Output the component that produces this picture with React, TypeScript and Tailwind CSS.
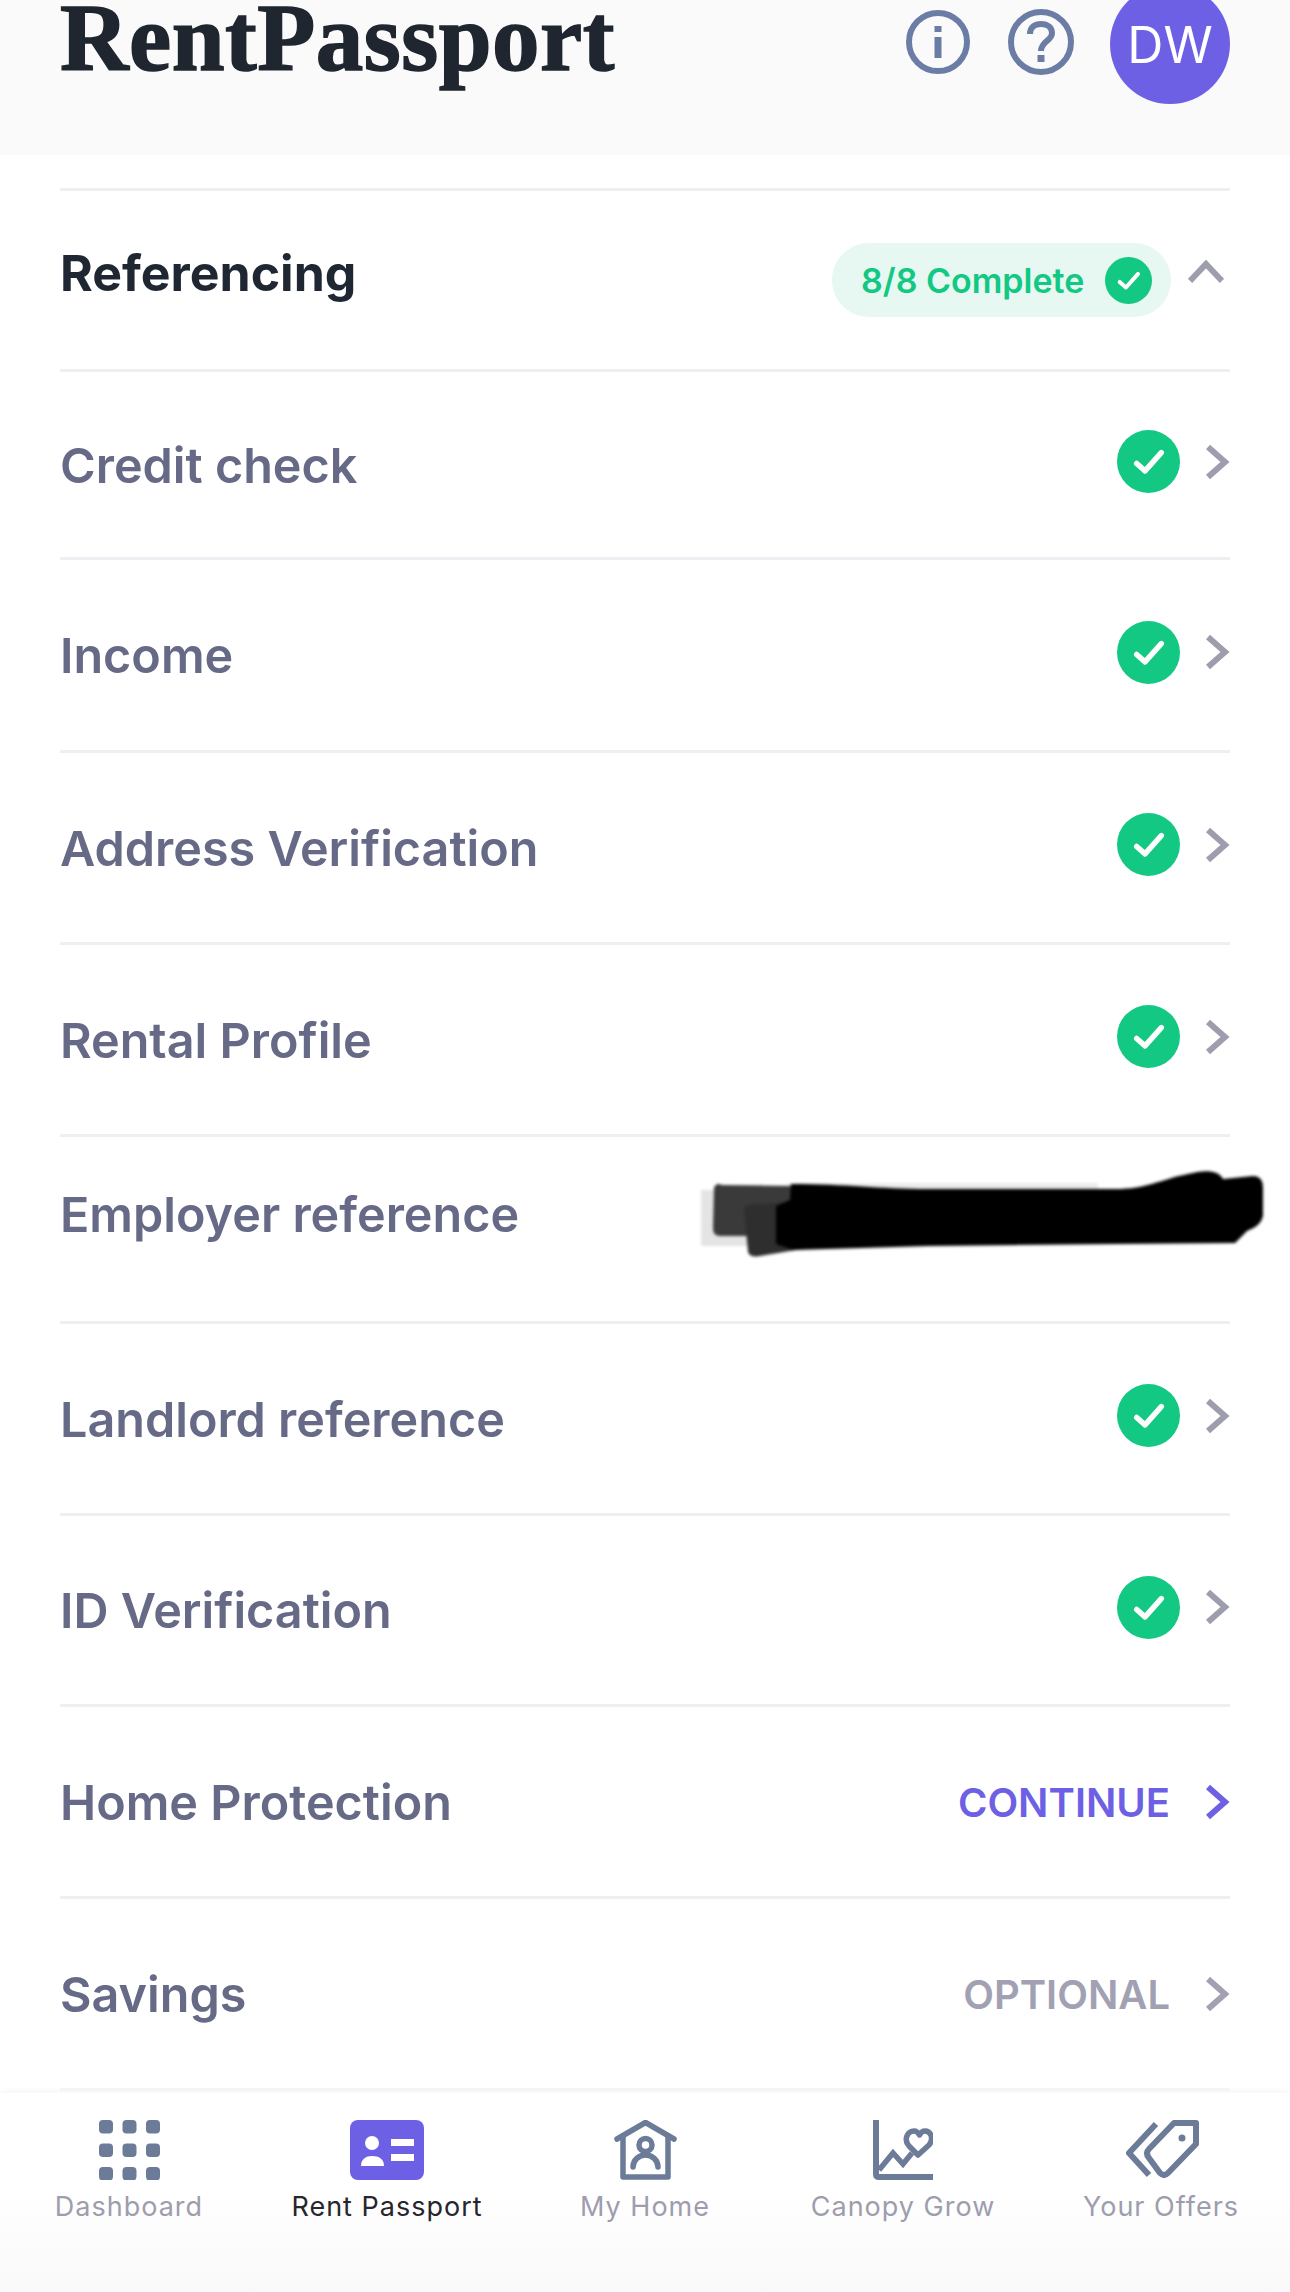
import React from "react";

const Chevron = ({ color }: { color: string }) => (
  <svg width="24" height="36" viewBox="0 0 24 36" fill="none" className="block">
    <path d="M2 3 L19 18 L2 33" stroke={color} strokeWidth="6" />
  </svg>
);

const GreenCheck = ({ size }: { size: number }) => (
  <svg width={size} height={size} viewBox="0 0 64 64" className="block shrink-0">
    <circle cx="32" cy="32" r="32" fill="#12c882" />
    <path d="M20 34 L28.5 41.5 L45 23" stroke="#fff" strokeWidth="5.5" strokeLinecap="round" strokeLinejoin="round" fill="none" />
  </svg>
);

const rows = [
  { label: "Credit check", h: "h-[188px]", kind: "done" },
  { label: "Income", h: "h-[193px]", kind: "done" },
  { label: "Address Verification", h: "h-[192px]", kind: "done" },
  { label: "Rental Profile", h: "h-[192px]", kind: "done" },
  { label: "Employer reference", h: "h-[187px]", kind: "hidden" },
  { label: "Landlord reference", h: "h-[192px]", kind: "done" },
  { label: "ID Verification", h: "h-[191px]", kind: "done" },
  { label: "Home Protection", h: "h-[192px]", kind: "continue" },
  { label: "Savings", h: "h-[192px]", kind: "optional" },
];

const Brush = () => (
  <svg width="570" height="100" viewBox="0 0 570 100" className="absolute right-[-38px] top-[29px] blur-[1.5px]">
    <path d="M3 24 H60 V80 H3 Z" fill="#e4e4e4" />
    <path d="M90 17 H400 V24 H90 Z" fill="#ebebeb" />
    <path d="M16 22 Q18 16 24 19 L100 20 L100 70 L22 70 Q15 70 15 62 Z" fill="#3a3a3a" />
    <path d="M46 42 Q48 38 60 38 L100 36 L110 82 L62 90 Q52 92 50 86 Z" fill="#2e2e2e" />
    <path d="M93 18 C150 18 180 23 230 23 L417 23 C450 23 460 14 490 8 C505 4 520 3 525 13 L555 10 Q565 10 565 22 L565 50 Q563 60 549 65 L537 77 L417 78 L230 80 L95 84 L78 78 L78 40 L92 34 Z" fill="#000" />
  </svg>
);

const NavItem = ({ label, active, children }: { label: string; active?: boolean; children: React.ReactNode }) => (
  <div className="flex flex-col items-center">
    <div className="h-[60px] flex items-center justify-center">{children}</div>
    <div className={`mt-[9px] text-[27px] leading-[36px] tracking-[1px] whitespace-nowrap font-['Inter',sans-serif] ${active ? "text-[#26262c]" : "text-[#9d9dad]"}`}>
      {label}
    </div>
  </div>
);

const icon = "#6c7b98";

export default function App() {
  return (
    <div className="w-[1290px] h-[2292px] flex flex-col overflow-hidden bg-white font-['Inter',sans-serif]">
      <header className="h-[155px] shrink-0 bg-[#fafafb] px-[60px] flex items-start justify-between">
        <div className="text-[95px] leading-[76px] font-bold text-[#20262f] font-['Liberation_Serif',serif] tracking-[0.5px] [-webkit-text-stroke:1.5px_#20262f]">RentPassport</div>
        <div className="flex items-start">
          <svg width="64" height="64" viewBox="0 0 64 64" className="mt-[10px] mr-[38px]">
            <circle cx="32" cy="32" r="29" fill="none" stroke="#6b7ca5" strokeWidth="6" />
            <rect x="28.5" y="16" width="7" height="6" fill="#6b7ca5" />
            <rect x="28.5" y="27" width="7" height="21" fill="#6b7ca5" />
          </svg>
          <svg width="66" height="66" viewBox="0 0 66 66" className="mt-[9px] mr-[36px]">
            <circle cx="33" cy="33" r="30" fill="none" stroke="#6b7ca5" strokeWidth="6" />
            <path d="M22 25 C22 18 27 15 33 15 C40 15 44 19 44 24 C44 32 33 32 33 42" fill="none" stroke="#6b7ca5" strokeWidth="6" />
            <rect x="29.5" y="46" width="7" height="7" fill="#6b7ca5" />
          </svg>
          <div className="-mt-[16px] pt-[2px] w-[120px] h-[120px] rounded-full bg-[#6e60e4] flex items-center justify-center text-white text-[50px]">DW</div>
        </div>
      </header>

      <main className="flex-1 min-h-0 px-[60px] pt-[33px] overflow-hidden">
        <div className="h-[3px] bg-[#efeff3]" />
        <div className="h-[181px] border-b-[3px] border-[#efeff3] flex items-center justify-between">
          <div className="text-[50px] font-bold text-[#1f2733] pb-[14px]">Referencing</div>
          <div className="flex items-start">
            <div className="h-[74px] w-[339px] rounded-full bg-[#e6f8f1] flex items-center justify-between pl-[29px] pr-[19px]">
              <span className="text-[34px] font-semibold text-[#12c882]">8/8 Complete</span>
              <GreenCheck size={47} />
            </div>
            <svg width="36" height="24" viewBox="0 0 36 24" className="ml-[17px] mt-[17px]" fill="none">
              <path d="M2 21 L18 4 L34 21" stroke="#9d9dad" strokeWidth="6" />
            </svg>
            <div className="w-[6px]" />
          </div>
        </div>

        {rows.map((r) => (
          <div key={r.label} className={`${r.h} relative border-b-[3px] ${r.kind === "optional" ? "border-[#f7f7f9]" : "border-[#efeff3]"} flex items-center justify-between`}>
            <div className={`text-[48.5px] font-semibold text-[#676a86] ${r.kind === "hidden" ? "pb-[28px]" : "pt-[3px]"}`}>{r.label}</div>
            {r.kind === "done" && (
              <div className="flex items-center gap-[26px] pb-[6px]">
                <GreenCheck size={63} />
                <Chevron color="#9d9dad" />
              </div>
            )}
            {r.kind === "continue" && (
              <div className="flex items-center gap-[36px]">
                <span className="text-[40px] font-semibold text-[#6e60e4] pt-[3px]">CONTINUE</span>
                <Chevron color="#6e60e4" />
              </div>
            )}
            {r.kind === "optional" && (
              <div className="flex items-center gap-[36px]">
                <span className="text-[40px] font-semibold text-[#a1a1b3] pt-[3px]">OPTIONAL</span>
                <Chevron color="#a1a1b3" />
              </div>
            )}
            {r.kind === "hidden" && <Brush />}
          </div>
        ))}
      </main>

      <nav className="h-[199px] shrink-0 pt-[27px] grid grid-cols-5 bg-gradient-to-b from-white from-50% to-[#f9f9fa] shadow-[0_-3px_6px_rgba(0,0,0,0.03)] relative">
        <NavItem label="Dashboard">
          <svg width="61" height="60" viewBox="0 0 61 60">
            {[0, 23.5, 47].map((y) =>
              [0, 23.5, 47].map((x) => <rect key={`${x}-${y}`} x={x} y={y} width="14" height="13.5" rx="4" fill={icon} />)
            )}
          </svg>
        </NavItem>
        <NavItem label="Rent Passport" active>
          <svg width="74" height="60" viewBox="0 0 74 60">
            <rect width="74" height="60" rx="8" fill="#6e60e4" />
            <circle cx="22" cy="23" r="7" fill="#fff" />
            <path d="M11 46 C11 39 16 36 22 36 C29 36 34 39 34 46 Z" fill="#fff" />
            <rect x="41" y="19" width="23" height="7" fill="#fff" />
            <rect x="41" y="34" width="23" height="7" fill="#fff" />
          </svg>
        </NavItem>
        <NavItem label="My Home">
          <svg width="63" height="60" viewBox="0 0 63 60" fill="none" stroke={icon} strokeWidth="5.5" strokeLinecap="round" strokeLinejoin="round">
            <path d="M3 19 L31.5 2.5 L60 19" />
            <path d="M9 16 V57 H54 V16" />
            <circle cx="31.5" cy="25" r="6.5" />
            <path d="M19 47 C19 40 25 35 31.5 35 C38 35 44 40 44 47" />
          </svg>
        </NavItem>
        <NavItem label="Canopy Grow">
          <svg width="60" height="60" viewBox="0 0 60 60" fill="none" stroke={icon} strokeWidth="6">
            <path d="M3 0 V54 Q3 57 6 57 H60" />
            <path d="M6 50 L20 33 L30 44 L39 33" strokeWidth="5.5" />
            <path d="M45 35 L36 26 C30 19 35 11 41 11 C44 11 45.5 13 46.5 15 C47.5 13 49 11 52 11 C58 11 61 19 56 25 Z" strokeWidth="5.5" strokeLinejoin="round" />
          </svg>
        </NavItem>
        <NavItem label="Your Offers">
          <svg width="75" height="60" viewBox="0 0 75 60" fill="none" stroke={icon} strokeWidth="6">
            <path d="M32 4 L5 33 L25 55" strokeLinejoin="round" />
            <path d="M50 3 H72 V24 L44 53 Q40 57 36 53 L25 38 Q21 33 25 29 Z" strokeLinejoin="round" />
            <circle cx="58" cy="18" r="3.5" fill={icon} stroke="none" />
          </svg>
        </NavItem>
      </nav>
    </div>
  );
}
